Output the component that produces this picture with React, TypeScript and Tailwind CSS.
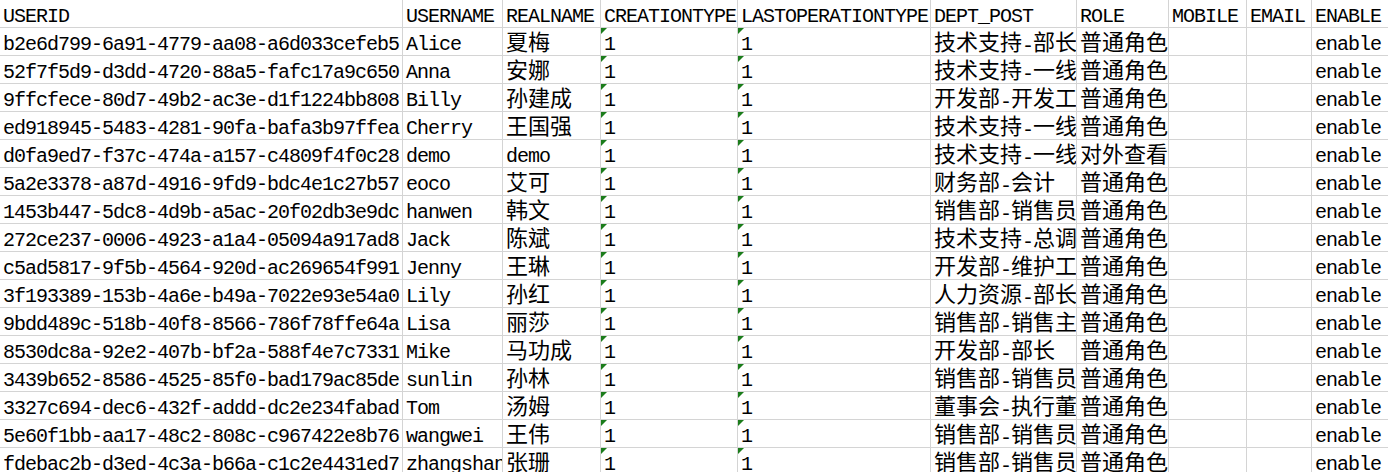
import React from 'react';

const headers = [
  'USERID',
  'USERNAME',
  'REALNAME',
  'CREATIONTYPE',
  'LASTOPERATIONTYPE',
  'DEPT_POST',
  'ROLE',
  'MOBILE',
  'EMAIL',
  'ENABLE',
];

// [userid, username, realname, dept_post, role]
const rows: [string, string, string, string, string][] = [
  ['b2e6d799-6a91-4779-aa08-a6d033cefeb5', 'Alice', '夏梅', '技术支持-部长', '普通角色'],
  ['52f7f5d9-d3dd-4720-88a5-fafc17a9c650', 'Anna', '安娜', '技术支持-一线', '普通角色'],
  ['9ffcfece-80d7-49b2-ac3e-d1f1224bb808', 'Billy', '孙建成', '开发部-开发工程师', '普通角色'],
  ['ed918945-5483-4281-90fa-bafa3b97ffea', 'Cherry', '王国强', '技术支持-一线', '普通角色'],
  ['d0fa9ed7-f37c-474a-a157-c4809f4f0c28', 'demo', 'demo', '技术支持-一线', '对外查看角色'],
  ['5a2e3378-a87d-4916-9fd9-bdc4e1c27b57', 'eoco', '艾可', '财务部-会计', '普通角色'],
  ['1453b447-5dc8-4d9b-a5ac-20f02db3e9dc', 'hanwen', '韩文', '销售部-销售员', '普通角色'],
  ['272ce237-0006-4923-a1a4-05094a917ad8', 'Jack', '陈斌', '技术支持-总调度', '普通角色'],
  ['c5ad5817-9f5b-4564-920d-ac269654f991', 'Jenny', '王琳', '开发部-维护工程师', '普通角色'],
  ['3f193389-153b-4a6e-b49a-7022e93e54a0', 'Lily', '孙红', '人力资源-部长', '普通角色'],
  ['9bdd489c-518b-40f8-8566-786f78ffe64a', 'Lisa', '丽莎', '销售部-销售主管', '普通角色'],
  ['8530dc8a-92e2-407b-bf2a-588f4e7c7331', 'Mike', '马功成', '开发部-部长', '普通角色'],
  ['3439b652-8586-4525-85f0-bad179ac85de', 'sunlin', '孙林', '销售部-销售员', '普通角色'],
  ['3327c694-dec6-432f-addd-dc2e234fabad', 'Tom', '汤姆', '董事会-执行董事', '普通角色'],
  ['5e60f1bb-aa17-48c2-808c-c967422e8b76', 'wangwei', '王伟', '销售部-销售员', '普通角色'],
  ['fdebac2b-d3ed-4c3a-b66a-c1c2e4431ed7', 'zhangshan', '张珊', '销售部-销售员', '普通角色'],
];

const gridCols =
  'grid grid-cols-[403px_100px_98px_137px_193px_146px_92px_78px_65px_1fr]';

// split text so CJK runs get a full-width CJK font at a larger size
const Txt: React.FC<{ text: string }> = ({ text }) => {
  const parts = text.split(/([\u3000-\u9fff\uff00-\uffef]+)/).filter(p => p.length > 0);
  return (
    <>
      {parts.map((p, i) =>
        /[\u3000-\u9fff\uff00-\uffef]/.test(p) ? (
          <span
            key={i}
            className="relative top-[-2px] font-['Noto_Sans_CJK_SC',sans-serif] text-[22px] leading-none tracking-normal"
          >
            {p}
          </span>
        ) : (
          <span key={i}>{p}</span>
        )
      )}
    </>
  );
};

const Cell: React.FC<{ text?: string; flag?: boolean; last?: boolean }> = ({ text, flag, last }) => (
  <div
    className={`relative h-[28px] overflow-hidden whitespace-nowrap border-b border-[#d4d4d4] pl-[3px] pt-[3px] leading-[28px] ${
      last ? '' : 'border-r'
    }`}
  >
    {flag && (
      <span className="absolute left-0 top-0 h-0 w-0 border-r-[6px] border-t-[6px] border-r-transparent border-t-[#1b7c1b]" />
    )}
    {text && <Txt text={text} />}
  </div>
);

export default function App() {
  return (
    <div className="h-[472px] w-[1388px] overflow-hidden bg-white font-['Liberation_Mono',monospace] text-[20px] tracking-[-1px] text-black">
      <div className={`${gridCols} -mt-px`}>
        {headers.map((h, i) => (
          <div
            key={h}
            className={`h-[29px] overflow-hidden whitespace-nowrap border-b border-[#d4d4d4] pl-[3px] pt-[4px] leading-[28px] ${
              i === headers.length - 1 ? '' : 'border-r'
            }`}
          >
            {h}
          </div>
        ))}
      </div>
      {rows.map(r => (
        <div key={r[0]} className={gridCols}>
          <Cell text={r[0]} />
          <Cell text={r[1]} />
          <Cell text={r[2]} />
          <Cell text="1" flag />
          <Cell text="1" flag />
          <Cell text={r[3]} />
          <Cell text={r[4]} />
          <Cell />
          <Cell />
          <Cell text="enable" last />
        </div>
      ))}
    </div>
  );
}
